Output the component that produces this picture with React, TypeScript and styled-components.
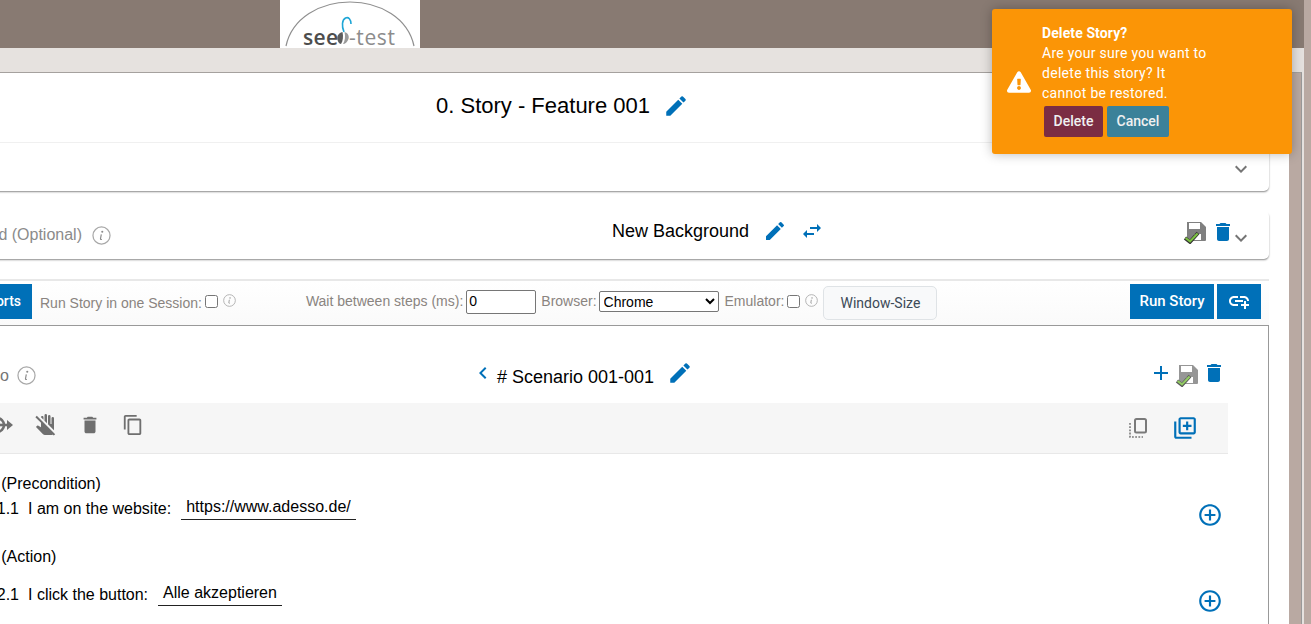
import React from "react";
import styled, { createGlobalStyle } from "styled-components";
import {
  MdEdit,
  MdSwapHoriz,
  MdAdd,
  MdExpandMore,
  MdChevronLeft,
  MdDelete,
  MdContentCopy,
  MdDoNotTouch,
  MdAddLink,
  MdOutlineLibraryAdd,
  MdAddCircleOutline,
} from "react-icons/md";
import { FaExclamationTriangle } from "react-icons/fa";

const Global = createGlobalStyle`
  html, body { margin: 0; padding: 0; height: 100%; overflow: hidden; background: #b9a9a2; }
  body { font-family: "Liberation Sans", Arial, sans-serif; color: #000; }
  * { box-sizing: border-box; }
`;

const Page = styled.div`
  width: 1311px;
  height: 624px;
  position: relative;
  overflow: hidden;
  background: #b9a9a2;
`;
const Frame = styled.div`
  width: 1304px;
  height: 624px;
  display: flex;
  flex-direction: column;
`;
const Header = styled.header`
  height: 48px;
  flex: none;
  background: #887a72;
  padding-left: 280px;
`;
const LogoBox = styled.div`
  width: 140px;
  height: 48px;
  background: #fff;
  overflow: hidden;
`;
const Band = styled.div`
  flex: 1;
  background: #e6e2df;
  padding: 24px 2px 0 0;
  display: flex;
  min-height: 0;
`;
const Main = styled.main`
  flex: 1;
  border-top: 1px solid #a5a19e;
  border-right: 1px solid #999;
  background: #b9a9a2;
  padding-right: 12px;
  min-width: 0;
`;
const Panel = styled.div`
  height: 100%;
  width: 1436px;
  margin-left: -147px;
  background: #fff;
  padding-right: 20px;
  overflow: hidden;
`;
const Card = styled.section`
  background: #fff;
  border-radius: 0 0 5px 5px;
  box-shadow: 0 2px 2px -1px rgba(0, 0, 0, 0.45), 2px 1px 2px -2px rgba(0, 0, 0, 0.3);
  margin-bottom: 20px;
`;
const TitleRow = styled.div`
  height: 70px;
  display: flex;
  align-items: center;
  justify-content: center;
  gap: 13px;
  padding: 0 0 3px 3px;
  border-bottom: 1px solid #f0f0f0;
`;
const StoryTitle = styled.h1`
  margin: 0;
  font-size: 22px;
  font-weight: 400;
  line-height: 26px;
`;
const DescRow = styled.div`
  height: 48px;
  display: flex;
  align-items: center;
  justify-content: flex-end;
  padding: 4px 16px 0 0;
  color: #757575;
`;
const BackgroundCard = styled(Card)`
  height: 48px;
  border-radius: 5px;
  display: flex;
  align-items: center;
  margin-top: 20px;
  margin-bottom: 20px;
`;
const OptionalSlot = styled.div`
  flex: 0 0 759px;
  display: flex;
  justify-content: flex-end;
  align-items: center;
  padding: 0 501px 0 0;
  gap: 10px;
  color: #8b8b8b;
  font-size: 16px;
  white-space: nowrap;
`;
const BackgroundName = styled.div`
  display: flex;
  align-items: center;
  height: 100%;
  padding-bottom: 8px;
  font-size: 18px;
  white-space: nowrap;
`;
const BackgroundIcons = styled.span`
  display: inline-flex;
  align-items: center;
  gap: 13px;
  margin-left: 14px;
`;
const CardEnd = styled.div`
  margin-left: auto;
  display: flex;
  align-items: center;
  padding: 0 16px 7px 0;
  color: #757575;
  height: 100%;
  gap: 4px;
`;
const DropChevron = styled.span`
  display: inline-flex;
  margin: 12px 0 0 -10px;
`;
const Toolbar = styled.div`
  height: 46px;
  border-top: 2px solid #e8e8e8;
  background: linear-gradient(#fff, #fafafa);
  display: flex;
  align-items: center;
  padding: 0 8px 4px 0;
  font-size: 14px;
  color: #8a8480;
  white-space: nowrap;
`;
const PrimaryButton = styled.button<{ $w: number }>`
  height: 35px;
  border: 0;
  border-radius: 0;
  background: #0070b8;
  color: #fff;
  font-family: Roboto, sans-serif;
  font-weight: 500;
  font-size: 15px;
  padding: 0;
  display: flex;
  align-items: center;
  justify-content: center;
  width: ${(p) => p.$w}px;
  flex: none;
`;
const ReportsButton = styled(PrimaryButton)`
  justify-content: flex-end;
  padding-right: 11px;
  font-size: 14px;
`;
const SessionLabel = styled.label`
  margin-left: 8px;
  display: inline-flex;
  align-items: center;
`;
const SessionText = styled.span`
  margin-top: 4px;
`;
const Check = styled.input.attrs({ type: "checkbox" })`
  width: 13px;
  height: 13px;
  margin: 0 0 0 3px;
  flex: none;
`;
const InfoSmall = styled.span`
  display: inline-flex;
  margin: 0 0 2px 5px;
`;
const WaitGroup = styled.div`
  margin: 1px 0 0 70px;
  display: flex;
  align-items: center;
`;
const GroupLabel = styled.span`
  margin-bottom: 2px;
`;
const WaitInput = styled.input`
  width: 70px;
  height: 24px;
  margin: 0 5px 0 3px;
  border: 1px solid #767676;
  border-radius: 2px;
  padding: 0 2px 2px;
  font: 14px "Liberation Sans", Arial, sans-serif;
  color: #000;
  background: #fff;
`;
const BrowserSelect = styled.select`
  width: 120px;
  height: 21px;
  margin: 0 6px 0 2px;
  border: 1px solid #767676;
  border-radius: 2px;
  font: 14px "Liberation Sans", Arial, sans-serif;
  color: #000;
  background: #fff;
`;
const WindowButton = styled.button`
  width: 114px;
  height: 34px;
  margin: 3px 0 0 5px;
  border: 1px solid #dfe3e6;
  border-radius: 5px;
  background: #f8f9fa;
  color: #3c4a57;
  font: 400 14px Roboto, sans-serif;
`;
const RunGroup = styled.div`
  margin-left: auto;
  display: flex;
  gap: 3px;
`;
const ScenarioBox = styled.div`
  border: 1px solid #999;
  border-bottom: 0;
  height: 320px;
  padding-right: 40px;
`;
const ScenarioHead = styled.div`
  height: 77px;
  display: grid;
  grid-template-columns: 617px 1fr auto;
  align-items: center;
  padding: 16px 2px 0 0;
`;
const ScenarioLeft = styled.div`
  display: flex;
  justify-content: flex-end;
  padding: 6px 435px 0 0;
  align-items: center;
  gap: 8px;
  color: #757575;
  font-size: 16px;
  white-space: nowrap;
`;
const ScenarioCenter = styled.div`
  display: flex;
  align-items: center;
`;
const ScenarioName = styled.span`
  font-size: 18px;
  line-height: 22px;
  margin: 9px 13px 0 2px;
`;
const ScenarioRight = styled.div`
  display: flex;
  align-items: center;
  gap: 3px;
`;
const ScenarioSave = styled.span`
  display: inline-flex;
  margin: 4px 0 0 -1px;
  opacity: 0.82;
`;
const ActionBar = styled.div`
  height: 51px;
  background: #f6f6f6;
  border-bottom: 1px solid #e8e8e8;
  display: flex;
  align-items: center;
  padding: 0 30px 6px 0;
`;
const ActionsLeft = styled.div`
  width: 290px;
  display: flex;
  align-items: center;
  justify-content: flex-end;
  gap: 21px;
  color: #6f6f6f;
`;
const ActionsRight = styled.div`
  margin-left: auto;
  display: flex;
  align-items: center;
  gap: 25px;
  padding-top: 6px;
`;
const StepList = styled.div`
  padding-top: 19px;
  font-size: 16px;
  line-height: 22px;
`;
const StepHeading = styled.div`
  padding-left: 101px;
  white-space: nowrap;
`;
const StepRow = styled.div<{ $h: number; $top?: number }>`
  display: flex;
  align-items: flex-start;
  height: ${(p) => p.$h}px;
  margin-top: ${(p) => p.$top ?? 0}px;
  padding-top: 3px;
  white-space: nowrap;
`;
const StepNumber = styled.span`
  width: 165px;
  text-align: right;
  margin-right: 9px;
`;
const StepValue = styled.span`
  margin: -1px 0 0 10px;
  padding: 0 5px 2px;
  border-bottom: 1px solid #222;
  line-height: 20px;
`;
const StepAdd = styled.span`
  margin: 4px 5px 0 auto;
  display: inline-flex;
  color: #0070b8;
`;
const BlueIcon = styled.span`
  color: #0070b8;
  display: inline-flex;
`;
const Toast = styled.aside`
  position: absolute;
  left: 992px;
  top: 9px;
  width: 300px;
  height: 145px;
  background: #fb9506;
  border-radius: 3px;
  box-shadow: 0 0 12px rgba(0, 0, 0, 0.28);
  display: flex;
  align-items: center;
  padding-left: 15px;
  color: #fff;
  font: 400 14px/20px Roboto, sans-serif;
`;
const ToastBody = styled.div`
  margin-left: 11px;
  padding-bottom: 3px;
  letter-spacing: 0.28px;
`;
const ToastTitle = styled.div`
  font-weight: 700;
  letter-spacing: 0.1px;
`;
const ToastText = styled.div`
  width: 170px;
`;
const ToastActions = styled.div`
  display: flex;
  gap: 4px;
  margin: 3px 0 0 2px;
`;
const ToastButton = styled.button<{ $bg: string; $w: number }>`
  height: 31px;
  width: ${(p) => p.$w}px;
  border: 0;
  border-radius: 2px;
  background: ${(p) => p.$bg};
  color: #f0f0f0;
  font: 500 14px Roboto, sans-serif;
  padding: 0 0 2px;
`;

const Info = ({ size = 19 }: { size?: number }) => (
  <svg width={size} height={size} viewBox="0 0 20 20" fill="none">
    <circle cx="10" cy="10" r="9" stroke="#a8a8a8" strokeWidth="1.3" />
    <circle cx="10.8" cy="6" r="1.1" fill="#8a8a8a" />
    <path d="M9.8 8.8 L8.9 13.6 Q8.8 14.6 10.4 14" stroke="#8a8a8a" strokeWidth="1.2" fill="none" />
  </svg>
);

const SaveCheck = () => (
  <svg width="24" height="24" viewBox="0 0 24 24">
    <path d="M4 2 H18 L23 7 V20 Q23 21 22 21 H5 Q4 21 4 20 Z" fill="#808080" />
    <rect x="6" y="3" width="11" height="6" fill="#fff" />
    <rect x="11" y="14" width="7" height="6" fill="#fff" />
    <path d="M2 18 L7 22 L15 13" fill="none" stroke="#333" strokeWidth="3.6" />
    <path d="M2.6 18 L7 21.4 L14.6 13.6" fill="none" stroke="#7cc242" strokeWidth="2.2" />
  </svg>
);

const ExitArrow = () => (
  <svg width="24" height="24" viewBox="0 0 24 24" fill="none">
    <path d="M2 5 H8 A7 7 0 0 1 8 19 H2" stroke="#6f6f6f" strokeWidth="2.6" />
    <path d="M8 12 H18" stroke="#6f6f6f" strokeWidth="2.6" />
    <path d="M18 7 L24 12 L18 17 Z" fill="#6f6f6f" />
  </svg>
);

const SelectionCopy = () => (
  <svg width="18" height="20" viewBox="0 0 18 20" fill="none">
    <rect x="6" y="1" width="11" height="13.5" rx="1.5" stroke="#7a7a7a" strokeWidth="2" />
    <path d="M1 5 V19 H14" stroke="#7a7a7a" strokeWidth="1.6" strokeDasharray="1.8 1.4" />
  </svg>
);

const Logo = () => (
  <svg width="140" height="48" viewBox="0 0 140 48">
    <path d="M6 46 C12 18 40 2 70 2 C100 2 128 18 134 46" fill="none" stroke="#8f8f8f" strokeWidth="1.2" />
    <text x="23" y="45" fontFamily="'Open Sans', sans-serif" fontSize="21" fontWeight="600" fill="#4d4d4d" letterSpacing="0.3">see</text>
    <text x="69" y="45" fontFamily="'Open Sans', sans-serif" fontSize="21" fill="#8c8c8c" letterSpacing="0.6">-test</text>
    <path d="M62.5 32 C58 33 56.5 37 57.5 40 C58.5 43 60 44 61 44 C63 41 63.5 36 62.5 32 Z" fill="#5c5c5c" />
    <path d="M64.5 32 C68 33 69.5 36 68.5 39 C67.5 42 65 44 63 44 C65 41 65.5 36 64.5 32 Z" fill="#9a9a9a" />
    <path d="M64 32 C61.5 26 62 20 65.5 18 C68.5 16.5 71 19.5 71 24" fill="none" stroke="#1fa6d6" strokeWidth="1.6" />
  </svg>
);

export default function App() {
  return (
    <Page>
      <Global />
      <Frame>
        <Header>
          <LogoBox>
            <Logo />
          </LogoBox>
        </Header>
        <Band>
          <Main>
            <Panel>
              <Card>
                <TitleRow>
                  <StoryTitle>0. Story - Feature 001</StoryTitle>
                  <BlueIcon>
                    <MdEdit size={26} />
                  </BlueIcon>
                </TitleRow>
                <DescRow>
                  <MdExpandMore size={24} />
                </DescRow>
              </Card>
              <BackgroundCard>
                <OptionalSlot>
                  <span>Background (Optional)</span>
                  <Info />
                </OptionalSlot>
                <BackgroundName>
                  New Background
                  <BackgroundIcons>
                    <BlueIcon>
                      <MdEdit size={24} />
                    </BlueIcon>
                    <BlueIcon>
                      <MdSwapHoriz size={24} />
                    </BlueIcon>
                  </BackgroundIcons>
                </BackgroundName>
                <CardEnd>
                  <SaveCheck />
                  <BlueIcon>
                    <MdDelete size={24} />
                  </BlueIcon>
                  <DropChevron>
                    <MdExpandMore size={24} />
                  </DropChevron>
                </CardEnd>
              </BackgroundCard>
              <Toolbar>
                <ReportsButton $w={179}>Reports</ReportsButton>
                <SessionLabel>
                  <SessionText>Run Story in one Session:</SessionText>
                  <Check />
                </SessionLabel>
                <InfoSmall>
                  <Info size={13} />
                </InfoSmall>
                <WaitGroup>
                  <GroupLabel>Wait between steps (ms):</GroupLabel>
                  <WaitInput defaultValue="0" />
                  <GroupLabel>Browser:</GroupLabel>
                  <BrowserSelect defaultValue="Chrome">
                    <option>Chrome</option>
                  </BrowserSelect>
                  <GroupLabel>Emulator:</GroupLabel>
                  <Check />
                  <InfoSmall>
                    <Info size={13} />
                  </InfoSmall>
                  <WindowButton>Window-Size</WindowButton>
                </WaitGroup>
                <RunGroup>
                  <PrimaryButton $w={84}>Run Story</PrimaryButton>
                  <PrimaryButton $w={44}>
                    <MdAddLink size={24} />
                  </PrimaryButton>
                </RunGroup>
              </Toolbar>
              <ScenarioBox>
                <ScenarioHead>
                  <ScenarioLeft>
                    <span>Scenario</span>
                    <Info />
                  </ScenarioLeft>
                  <ScenarioCenter>
                    <BlueIcon>
                      <MdChevronLeft size={24} />
                    </BlueIcon>
                    <ScenarioName># Scenario 001-001</ScenarioName>
                    <BlueIcon>
                      <MdEdit size={26} />
                    </BlueIcon>
                  </ScenarioCenter>
                  <ScenarioRight>
                    <BlueIcon>
                      <MdAdd size={24} />
                    </BlueIcon>
                    <ScenarioSave>
                      <SaveCheck />
                    </ScenarioSave>
                    <BlueIcon>
                      <MdDelete size={24} />
                    </BlueIcon>
                  </ScenarioRight>
                </ScenarioHead>
                <ActionBar>
                  <ActionsLeft>
                    <ExitArrow />
                    <MdDoNotTouch size={24} />
                    <MdDelete size={22} />
                    <MdContentCopy size={22} />
                  </ActionsLeft>
                  <ActionsRight>
                    <SelectionCopy />
                    <BlueIcon>
                      <MdOutlineLibraryAdd size={26} />
                    </BlueIcon>
                  </ActionsRight>
                </ActionBar>
                <StepList>
                  <StepHeading>Given (Precondition)</StepHeading>
                  <StepRow $h={51}>
                    <StepNumber>1.1</StepNumber>
                    I am on the website:
                    <StepValue>https://www.adesso.de/</StepValue>
                    <StepAdd>
                      <MdAddCircleOutline size={26} />
                    </StepAdd>
                  </StepRow>
                  <StepHeading>When (Action)</StepHeading>
                  <StepRow $h={50} $top={13}>
                    <StepNumber>2.1</StepNumber>
                    I click the button:
                    <StepValue>Alle akzeptieren</StepValue>
                    <StepAdd>
                      <MdAddCircleOutline size={26} />
                    </StepAdd>
                  </StepRow>
                </StepList>
              </ScenarioBox>
            </Panel>
          </Main>
        </Band>
      </Frame>
      <Toast>
        <FaExclamationTriangle size={24} />
        <ToastBody>
          <ToastTitle>Delete Story?</ToastTitle>
          <ToastText>Are your sure you want to delete this story? It cannot be restored.</ToastText>
          <ToastActions>
            <ToastButton $bg="#7b2d43" $w={59}>Delete</ToastButton>
            <ToastButton $bg="#3b8199" $w={62}>Cancel</ToastButton>
          </ToastActions>
        </ToastBody>
      </Toast>
    </Page>
  );
}
